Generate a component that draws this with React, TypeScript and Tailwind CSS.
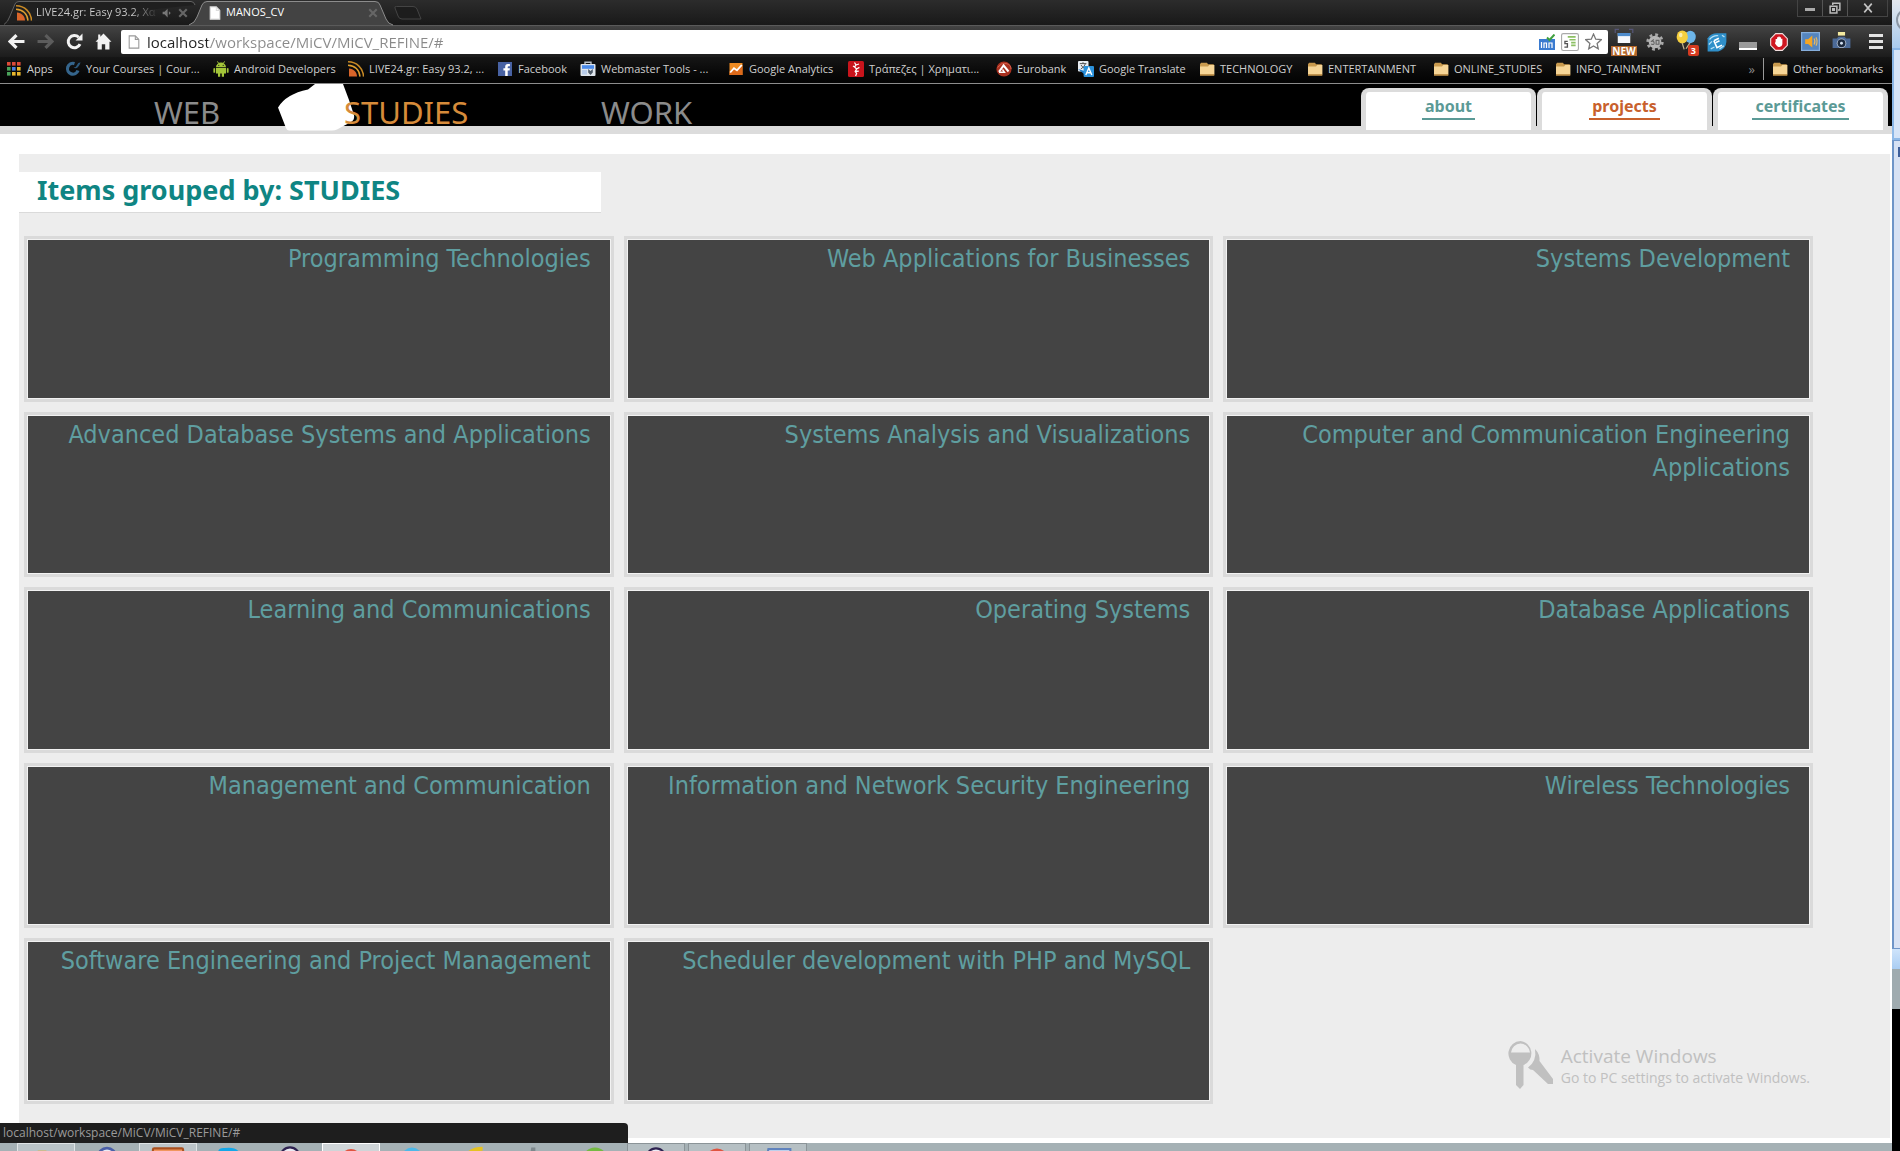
import type { ReactNode } from "react";

const cards = [
  "Programming Technologies",
  "Web Applications for Businesses",
  "Systems Development",
  "Advanced Database Systems and Applications",
  "Systems Analysis and Visualizations",
  "Computer and Communication Engineering Applications",
  "Learning and Communications",
  "Operating Systems",
  "Database Applications",
  "Management and Communication",
  "Information and Network Security Engineering",
  "Wireless Technologies",
  "Software Engineering and Project Management",
  "Scheduler development with PHP and MySQL",
];

function Svg({ children, className = "size-4" }: { children: ReactNode; className?: string }) {
  return (
    <svg viewBox="0 0 16 16" className={"shrink-0 " + className} fill="none" aria-hidden="true">
      {children}
    </svg>
  );
}

const Feed = () => (
  <Svg>
    <path d="M0 0.8C9 1 15 7 15.6 15.6" stroke="#c98a25" strokeWidth="1.6" />
    <path d="M0 4.2C7 4.5 11.5 9 12 15.6" stroke="#e0a030" strokeWidth="1.4" />
    <path d="M1 7.5C5.5 8 9 11 9 15.5H1Z" fill="#d9652a" />
  </Svg>
);
const Folder = () => (
  <Svg>
    <path d="M1 3.2 2 1.8H8L9 3.2H14.5L15 4V14.5H1Z" fill="#c99a4e" />
    <path d="M1 5.5H9L10.3 4H15.4V13.4H1Z" fill="#f6d596" />
    <path d="M1 13.2H15.4V14.6H1Z" fill="#b98b45" />
  </Svg>
);
const AppsIcon = () => (
  <Svg>
    {["#dd4b39", "#dd4b39", "#dd4b39", "#4aa35a", "#4a7fdc", "#e8b72e", "#4aa35a", "#e8b72e", "#e8b72e"].map((c, i) => (
      <rect key={i} x={1 + (i % 3) * 5} y={1 + Math.floor(i / 3) * 5} width="3.6" height="3.6" fill={c} />
    ))}
  </Svg>
);
const Coursera = () => (
  <Svg>
    <path d="M9.5 2.6A5.4 5.4 0 1 0 13 9.5" stroke="#35658c" strokeWidth="3.2" />
    <path d="M8.6 6.6Q11 8.4 13 6T15.6 1.6Q13 1.4 12 4T8.6 6.600Z" fill="#2c587b" />
  </Svg>
);
const Android = () => (
  <Svg>
    <path d="M3 6.3A5 4.8 0 0 1 13 6.3ZM3 7.1H13V12.6H3ZM0.4 7.4Q1.3 6.4 2.2 7.4V11.4Q1.3 12.3 0.4 11.4ZM13.8 7.4Q14.7 6.4 15.6 7.4V11.4Q14.7 12.3 13.8 11.4ZM5 12H7.2V15.7H5ZM8.8 12H11V15.7H8.8Z" fill="#a4c639" />
    <path d="M4.4 0.4 5.8 2.6M11.6 0.4 10.2 2.6" stroke="#a4c639" />
    <circle cx="5.8" cy="4.3" r=".6" fill="#111" />
    <circle cx="10.2" cy="4.3" r=".6" fill="#111" />
  </Svg>
);
const Facebook = () => (
  <Svg>
    <rect x="1" y="1" width="14" height="14" fill="#4862a3" />
    <path d="M8.2 15V9.6H6.4V7.3H8.2V5.6Q8.2 3 10.9 3H12.9V5.2H11.5Q10.7 5.2 10.7 6V7.3H12.9L12.6 9.6H10.7V15Z" fill="#fff" />
  </Svg>
);
const Webmaster = () => (
  <Svg>
    <path d="M5 3V1.2H11V3" stroke="#b8bec4" strokeWidth="1.4" />
    <rect x="0.5" y="3" width="15" height="12" rx="1" fill="#dfe5ec" />
    <rect x="2" y="4.2" width="12" height="3.6" fill="#4b8bea" />
    <rect x="2" y="9" width="5" height="4.5" fill="#b9cdea" />
    <path d="M8.2 8V11.5L10.5 14 12.8 11.5V8L10.5 10Z" fill="#4d5a68" />
  </Svg>
);
const Analytics = () => (
  <Svg>
    <rect x="1.5" y="2" width="13" height="12" fill="#ef8b22" />
    <path d="M1.5 14V11L6 7 9 9.5 14.5 4V14Z" fill="#dd6a1b" />
    <path d="M2.2 11.5 6 7.2 9 9.4 13.8 4" stroke="#fff" strokeWidth="1.8" />
  </Svg>
);
const RedBook = () => (
  <Svg>
    <rect width="16" height="16" rx="1.5" fill="#c8141c" />
    <path d="M6.5 1.5 8 4 6.6 6 8.6 8 7.2 10.5 8.6 12.4 7.6 15M8 4 11 3M8.6 8 11.4 6.4M7.2 10.5 10.8 10.2M6.6 6 5 5" stroke="#fff" strokeWidth="1.3" />
  </Svg>
);
const Eurobank = () => (
  <Svg>
    <circle cx="8" cy="8" r="7.6" fill="#a8301f" />
    <path d="M1.5 6.5Q5 1.5 10 2.500T15 8" stroke="#d8604c" />
    <path d="M3 10.800 7.600 4.500 12.500 10.500" stroke="#fff" strokeWidth="2" />
    <path d="M3 11.300H8.500L6.500 8.500" stroke="#fff" strokeWidth="1.400" />
  </Svg>
);
const Translate = () => (
  <Svg>
    <rect x="0" y="0" width="10.5" height="10.5" rx="1" fill="#e9edf2" />
    <path d="M1.8 2.6H8.4M5 1.2V2.6M2.8 8Q6.5 6 7.4 2.8M3 4Q4.5 6.8 7.5 7.8" stroke="#555" />
    <path d="M0 8 6 13 6.5 10Z" fill="#1b78c4" />
    <rect x="5.6" y="5" width="10.4" height="11" rx="1" fill="#2b92dc" />
    <path d="M7.8 14 10.8 7 13.8 14M8.8 11.8H12.8" stroke="#fff" strokeWidth="1.4" />
  </Svg>
);
const FileIcon = ({ fill, stroke }: { fill: string; stroke: string }) => (
  <Svg className="h-4 w-3.5">
    <path d="M2.5 1H9.5L13.5 5V15H2.5Z" fill={fill} stroke={stroke} strokeWidth="1.2" />
    <path d="M9.5 1V5H13.5" stroke={stroke} strokeWidth="1.2" />
  </Svg>
);
const Cross = () => (
  <Svg className="size-2.5">
    <path d="M2 2 14 14M14 2 2 14" stroke="#666" strokeWidth="3.4" />
  </Svg>
);

const bookmarks: [string, () => ReactNode, string][] = [
  ["Apps", AppsIcon, "w-[27px]"],
  ["Your Courses | Cour...", Coursera, "w-[116px]"],
  ["Android Developers", Android, "w-[103px]"],
  ["LIVE24.gr: Easy 93.2, ...", Feed, "w-[117px]"],
  ["Facebook", Facebook, "w-[51px]"],
  ["Webmaster Tools - ...", Webmaster, "w-[116px]"],
  ["Google Analytics", Analytics, "w-[88px]"],
  ["Τράπεζες | Χρηματι...", RedBook, "w-[116px]"],
  ["Eurobank", Eurobank, "w-[50px]"],
  ["Google Translate", Translate, "w-[89px]"],
  ["TECHNOLOGY", Folder, "w-[76px]"],
  ["ENTERTAINMENT", Folder, "w-[94px]"],
  ["ONLINE_STUDIES", Folder, "w-[90px]"],
  ["INFO_TAINMENT", Folder, "w-[92px]"],
];

function BrowserTabs() {
  return (
    <div className="flex h-[25px] items-start bg-linear-to-b from-[#2c2c2c] to-[#191919] pl-1">
      <div className="relative h-[25px] w-[192px]">
        <svg className="absolute inset-0 size-full" viewBox="0 0 192 25" preserveAspectRatio="none" aria-hidden="true">
          <path d="M0 24.5Q4 22 6 16L11 4Q12 1.5 15 1.5H187Q190 1.5 191 5" fill="#1f1f1f" stroke="#626262" />
        </svg>
        <div className="relative flex h-[25px] items-center pl-3">
          <Feed />
          <span className="ml-1 w-[120px] overflow-hidden bg-linear-to-r from-[#d0d0d0] from-80% to-[#333] bg-clip-text text-[11px] whitespace-nowrap text-transparent">
            LIVE24.gr: Easy 93.2, Χα
          </span>
          <Svg className="ml-1.5 size-2.5">
            <path d="M1 6H4L9 1V15L4 10H1ZM11 5 14 8 11 11" fill="#777" />
          </Svg>
          <button aria-label="Close tab" className="ml-1.5">
            <Cross />
          </button>
        </div>
      </div>
      <div className="relative h-[25px] w-[198px]">
        <svg className="absolute inset-0 size-full overflow-visible" viewBox="0 0 198 25" preserveAspectRatio="none" aria-hidden="true">
          <path d="M-7 25Q-1 23 1 17L6 5Q7.500 1.500 11 1.500H179Q183 1.500 184 5L190 19Q192 24 197 25Z" fill="#434343" />
          <path d="M-7 25Q-1 23 1 17L6 5Q7.500 1.500 11 1.500H179Q183 1.500 184 5L190 19Q192 24 197 25" fill="none" stroke="#8c8c8c" />
        </svg>
        <div className="relative flex h-[25px] items-center pl-3">
          <FileIcon fill="#fff" stroke="#ddd" />
          <span className="ml-1 w-[142px] text-[11px] text-white">MANOS_CV</span>
          <button aria-label="Close tab">
            <Cross />
          </button>
        </div>
      </div>
      <button aria-label="New tab" className="mt-1.5">
        <svg viewBox="0 0 28 14" className="h-3.5 w-7" fill="#1d1d1d" stroke="#444" aria-hidden="true">
          <path d="M1 2Q0 .5 2.500 .5H19Q22 .5 23 3L27 13H8Q5 13 4 10Z" />
        </svg>
      </button>
      <div className="mr-1 ml-auto flex h-[17px] w-[91px] divide-x divide-[#555] border-x border-b border-[#444]">
        <button aria-label="Minimize" className="flex w-[25px] justify-center pt-2">
          <span className="h-[3px] w-2.5 bg-[#aaa]" />
        </button>
        <button aria-label="Restore" className="flex w-[25px] items-center justify-center">
          <Svg className="size-3">
            <path d="M5 4V1.500H14.500V10.500H12" stroke="#bbb" strokeWidth="2" />
            <path d="M1.500 5.500H10.500V14.500H1.500ZM5 9H7V11H5Z" stroke="#bbb" strokeWidth="2" />
          </Svg>
        </button>
        <button aria-label="Close" className="flex flex-1 items-center justify-center">
          <Svg className="h-2.5 w-3">
            <path d="M2 1 14 15M14 1 2 15" stroke="#c4c4c4" strokeWidth="2.600" />
          </Svg>
        </button>
      </div>
    </div>
  );
}

function Extensions() {
  return (
    <div className="flex items-center gap-[7px] pl-1">
      <button aria-label="Screen capture" className="relative flex h-7 w-6 justify-center">
        <Svg className="size-5">
          <path d="M1 4V1H4M12 1H15V4" stroke="#557" strokeWidth="1" />
          <rect x="3" y="4" width="10" height="8" fill="#f5f8fc" />
          <rect x="3" y="4" width="10" height="2.500" fill="#4e8ccc" />
        </Svg>
        <span className="absolute bottom-0 bg-[#b3672c] px-px text-[10px] leading-[10px] font-bold text-white">NEW</span>
      </button>
      <button aria-label="Settings extension" className="flex w-6 justify-center">
        <Svg className="size-[18px]">
          <circle cx="8" cy="8" r="5.600" fill="#b5b5b5" />
          <circle cx="8" cy="8" r="6.500" stroke="#a8a8a8" strokeWidth="2.400" strokeDasharray="2.500 2.600" />
          <path d="M4.600 9.800Q7.500 11 7.200 8.800T5.200 7.400 7 5.800M9 10V6.500H11.500V10Z" stroke="#666" />
        </Svg>
      </button>
      <button aria-label="Balloons" className="relative flex h-6 w-6 justify-center">
        <Svg className="size-5">
          <ellipse cx="11.500" cy="5.500" rx="4.300" ry="5" fill="#6db6ea" />
          <ellipse cx="5" cy="5.500" rx="4.500" ry="5.200" fill="#f5cf3f" />
          <ellipse cx="3.800" cy="4" rx="1.400" ry="1.800" fill="#fbeeb0" />
          <path d="M5 10.500 6.500 15.500M11 10.500 8 15" stroke="#c8b48a" />
        </Svg>
        <span className="absolute -right-px -bottom-0.5 rounded-xs bg-[#d63a20] px-[3px] text-[9px] leading-[11px] font-bold text-white">3</span>
      </button>
      <button aria-label="Editor" className="flex w-6 justify-center">
        <Svg className="size-5">
          <path d="M0.500 5Q3 1 8 1H15.500V8Q15 14 9 15.500H.5Z" fill="#2f8fc9" />
          <path d="M2 6Q5 2.500 9 3M1.500 10 4 7.500M3 13.500 6 12M12 2.500 14 4M10 13.500 13.500 11" stroke="#b6e0f5" />
          <path d="M5.500 7 8 12.500 12 10.500M7 8.500 10 7M5.500 7 9.500 5" stroke="#fff" strokeWidth="1.300" />
        </Svg>
      </button>
      <button aria-label="Bar" className="flex h-4 w-6 items-end justify-center">
        <span className="h-2 w-[18px] border-b-2 border-white bg-[#9a9a9a]" />
      </button>
      <button aria-label="Ad blocker" className="flex w-6 justify-center">
        <Svg className="size-[18px]">
          <path d="M5 .6H11L15.400 5V11L11 15.400H5L.6 11V5Z" fill="#cf1620" stroke="#f2dede" />
          <path d="M5 7.500V5.300H6.300V3.800H7.500V3.200H8.600V3.800H9.800V5.200H11V10Q10.500 12.500 8.500 12.500H7.600Q6.500 12.300 4.400 9Z" fill="#fff" />
        </Svg>
      </button>
      <button aria-label="Volume" className="flex w-6 justify-center">
        <Svg className="size-[19px]">
          <rect x=".5" y=".5" width="15" height="15" fill="#5485bf" stroke="#86aedb" />
          <path d="M3.500 6H6L9.500 3V13L6 10H3.500Z" fill="#f5a623" />
          <path d="M11 5.500Q12.500 8 11 10.500M12.600 4.500Q14.500 8 12.600 11.500" stroke="#e8b860" />
        </Svg>
      </button>
      <button aria-label="Camera" className="flex w-6 justify-center">
        <Svg className="size-[19px]">
          <rect x="5" y="0" width="6" height="3" fill="#f3e9a0" />
          <path d="M.5 5.500H4L5.500 4H10.500L12 5.500H15.500V13.500H.5Z" fill="#4c6a97" />
          <circle cx="8" cy="9.500" r="4" fill="#b9c6d8" />
          <circle cx="8" cy="9.500" r="3.300" fill="#1d2a3e" />
          <circle cx="8" cy="9.500" r="1.200" fill="#d5e2f2" />
        </Svg>
      </button>
      <button aria-label="Menu" className="ml-1 flex w-6 flex-col items-center gap-[3px]">
        <span className="h-[3px] w-3.5 bg-[#e4e4e4]" />
        <span className="h-[3px] w-3.5 bg-[#e4e4e4]" />
        <span className="h-[3px] w-3.5 bg-[#e4e4e4]" />
      </button>
    </div>
  );
}

function Toolbar() {
  return (
    <div className="flex h-8 items-center border-t border-[#5a5a5a] bg-linear-to-b from-[#434343] to-[#1c1c1c] pr-1 pl-2">
      <div className="flex w-[113px] gap-3">
        <button aria-label="Back">
          <Svg className="size-[17px]">
            <path d="M8 2 2 8 8 14M2 8H15.500" stroke="#f2f2f2" strokeWidth="3" />
          </Svg>
        </button>
        <button aria-label="Forward">
          <Svg className="size-[17px]">
            <path d="M8 2 14 8 8 14M14 8H.5" stroke="#5c5c5c" strokeWidth="3" />
          </Svg>
        </button>
        <button aria-label="Reload">
          <Svg className="size-[17px]">
            <path d="M13.200 10.500A5.800 5.800 0 1 1 12 4" stroke="#f2f2f2" strokeWidth="2.800" />
            <path d="M15.500 .5V7H9Z" fill="#f2f2f2" />
          </Svg>
        </button>
        <button aria-label="Home">
          <Svg className="size-[17px]">
            <path d="M8 .5 15.500 8.300H13.600V15.500H9.600V10.500H6.400V15.500H2.400V8.300H.5L3 5.600V1.500H5V3.600Z" fill="#f2f2f2" />
          </Svg>
        </button>
      </div>
      <div className="flex h-6 flex-1 items-center gap-1.5 rounded-xs bg-white px-1.5">
        <FileIcon fill="#fff" stroke="#999" />
        <input
          aria-label="Address"
          defaultValue="localhost/workspace/MiCV/MiCV_REFINE/#"
          className="h-6 min-w-0 flex-1 bg-[linear-gradient(to_right,#222_61px,#8a8a8a_61px)] bg-clip-text text-[15px] text-transparent outline-none"
        />
        <Svg className="size-4">
          <rect y="5" width="16" height="11" fill="#3a7bd0" />
          <path d="M2.500 8V14M5 14V9H7.500V14M10 14V9H13V14" stroke="#fff" strokeWidth="1.200" />
          <path d="M8 3.500 10.500 6 15.500 .5" stroke="#3fa03f" strokeWidth="2" />
        </Svg>
        <Svg className="size-[18px]">
          <rect x=".5" y=".5" width="15" height="15" rx="1.500" fill="#fff" stroke="#aaa" />
          <path d="M6 3.500H13M7.500 6H13M9 8.500H13M9 11H13" stroke="#8cc063" strokeWidth="1.500" />
          <path d="M6 7.500H3.500V9.500H5.700V12.500H3" stroke="#555" strokeWidth="1.200" />
        </Svg>
        <Svg className="size-[17px]">
          <path d="M8 1 10.100 5.800 15.300 6.300 11.400 9.800 12.500 14.900 8 12.200 3.500 14.900 4.600 9.800 .7 6.300 5.900 5.800Z" stroke="#777" strokeWidth="1.200" />
        </Svg>
      </div>
      <Extensions />
    </div>
  );
}

function Bookmarks() {
  return (
    <nav aria-label="Bookmarks" className="flex h-[27px] items-center border-b border-[#8d8d8d] bg-linear-to-b from-[#161616] to-[#030303] px-1.5 pb-[3px] text-[11px] leading-4 text-[#cfcfcf]">
      <div className="flex min-w-0 flex-1 items-center gap-[11px] overflow-hidden">
        {bookmarks.map(([label, Icon, width]) => (
          <a key={label} href="#" className="flex shrink-0 items-center gap-[5px] whitespace-nowrap">
            <Icon />
            <span className={width}>{label}</span>
          </a>
        ))}
      </div>
      <button aria-label="More bookmarks" className="text-[13px] text-[#888]">
        »
      </button>
      <span className="mx-2 h-[22px] w-px bg-[#999]" />
      <a href="#" className="flex items-center gap-[5px] whitespace-nowrap">
        <Folder />
        <span className="w-[93px]">Other bookmarks</span>
      </a>
    </nav>
  );
}

function SiteTab({ label, active = false }: { label: string; active?: boolean }) {
  return (
    <a
      href="#"
      className="flex w-[175px] justify-center rounded-t-lg border-x-[5px] border-t-4 border-[#dcdcdc] bg-white pt-0.5 text-[16px] leading-6 font-bold"
    >
      <span
        className={
          active
            ? "h-[26px] border-b-2 border-[#c8602c] px-[3px] text-[#c8602c]"
            : "h-[26px] border-b-2 border-[#5b9a96] px-[3px] text-[#5b9a96]"
        }
      >
        {label}
      </span>
    </a>
  );
}

function SiteHeader() {
  return (
    <header className="flex h-[50px] items-start border-b-8 border-[#dcdcdc] bg-black pr-1 pl-[154px] font-['Noto_Sans',sans-serif]">
      <nav aria-label="Sections" className="flex pt-3 text-[31px] leading-8 text-[#8b8b8b]">
        <a href="#" className="w-[190px]">
          WEB
        </a>
        <a href="#" className="relative w-[257px] text-[#d68b3a]">
          <svg viewBox="0 0 77 47" className="absolute -top-3 -left-[66px] h-[47px] w-[77px]" fill="#fff" aria-hidden="true">
            <path d="M0 23.500Q8 10 30 5.500L37 0H65L71 16 76 31Q77 36 73 38L59 45.500Q57 46.500 54 46.500H11Q9 46.500 8 44Z" />
          </svg>
          <span className="relative">STUDIES</span>
        </a>
        <a href="#">WORK</a>
      </nav>
      <nav aria-label="Pages" className="ml-auto pt-1">
        <div className="flex h-[42px] gap-px">
          <SiteTab label="about" />
          <SiteTab label="projects" active />
          <SiteTab label="certificates" />
        </div>
      </nav>
    </header>
  );
}

const raised = "border border-[#8b9498] bg-[#b6c0c4]";
const taskIcons: [ReactNode, string][] = [
  [<path d="M2 2.500H8L10 4H15V16H2Z" fill="#d9b65c" />, "border border-[#dfe4e6] bg-[#b9c3c7]"],
  [<circle cx="8" cy="8" r="6.500" fill="#e8ecf6" stroke="#4a5fa8" strokeWidth="2" />, ""],
  [<rect x="-3" y="1" width="22" height="18" rx="1" fill="#f0965e" stroke="#a9501f" strokeWidth="1.500" />, "border border-[#dfe4e6] bg-[#bcc5c9]"],
  [<path d="M0 5Q0 1 5 1.500 16 0 17 9V16H0Z" fill="#14a7e8" />, ""],
  [<circle cx="8" cy="8" r="7" fill="#ecebf4" stroke="#2d2150" strokeWidth="1.500" />, ""],
  [<circle cx="8" cy="9" r="7.500" fill="#e0543f" />, "border border-white bg-[#cfd5d8]"],
  [<circle cx="8" cy="8.500" r="7.500" fill="#4db8e8" />, ""],
  [<path d="M2 10Q5 2 15 2" stroke="#e5c222" strokeWidth="3" />, ""],
  [<path d="M6 1H9V5L11 8H5Z" fill="#7d888c" />, ""],
  [<circle cx="8" cy="10" r="9" fill="#74b943" />, ""],
  [<circle cx="8" cy="8" r="7" fill="#ecebf4" stroke="#2d2150" strokeWidth="1.500" />, raised],
  [<circle cx="8" cy="9" r="8" fill="#e0543f" />, raised],
  [<path d="M-1 12 1 1.500H17V16H-1Z" fill="#bdd0ec" stroke="#5f82bd" strokeWidth="1.500" />, raised],
];

function Taskbar() {
  return (
    <footer className="flex h-2 gap-[3px] overflow-hidden bg-[#a5b1b5] pl-[17px]">
      {taskIcons.map(([icon, look], i) => (
        <button key={i} aria-label={"Task " + (i + 1)} className={"flex h-10 w-[58px] shrink-0 justify-center pt-[3px] " + look}>
          <Svg className="size-[22px] overflow-visible">{icon}</Svg>
        </button>
      ))}
    </footer>
  );
}

function NextWindowEdge() {
  return (
    <aside aria-hidden="true" className="flex w-2 shrink-0 flex-col overflow-hidden bg-black">
      <div className="h-12 bg-linear-to-b from-[#e4e8ee] to-[#a9cbee] pt-2">
        <div className="ml-1 size-6 rounded-full border-2 border-[#8b97a5] bg-[#dde5ee]" />
      </div>
      <div className="h-[92px] border-y-2 border-l-2 border-[#8ab6e6] bg-[#d6e4f7]" />
      <div className="h-[809px] border-y border-l-2 border-[#6f95c8] bg-[#d8e2f4] pt-1.5">
        <div className="ml-1 h-2.5 w-2 border-2 border-[#3f5f9a]" />
      </div>
      <div className="h-5 bg-linear-to-b from-[#cfe4fb] to-[#a9cdf3]" />
      <div className="h-10 bg-[#9fabaf]" />
    </aside>
  );
}

export default function App() {
  return (
    <div className="flex min-h-screen bg-white font-['Open_Sans',sans-serif]">
      <div className="relative flex min-w-0 flex-1 flex-col">
        <BrowserTabs />
        <Toolbar />
        <Bookmarks />
        <SiteHeader />
        <main className="mt-5 mr-0.5 mb-[5px] ml-[19px] flex flex-1 flex-col bg-[#ededed] pt-[18px] pb-[34px]">
          <h1 className="h-[41px] w-[582px] border-b border-[#dadada] bg-white pl-[18px] font-['Noto_Sans',sans-serif] text-[27px] leading-9 font-bold text-[#0f8583]">
            Items grouped by: STUDIES
          </h1>
          <ul className="mt-[23px] mr-[77px] ml-[5px] grid flex-1 auto-rows-fr grid-cols-3 gap-2.5">
            {cards.map((title) => (
              <li key={title} className="border-[3px] border-[#dadada]">
                <a
                  href="#"
                  className="block h-full border border-[#f2f2f2] bg-[#444] pt-0.5 pr-[19px] pl-5 text-right font-['DejaVu_Sans_Condensed','Noto_Sans',sans-serif] text-[25px] leading-[33px] text-[#5f9ea0]"
                >
                  {title}
                </a>
              </li>
            ))}
          </ul>
        </main>
        <Taskbar />
        <div className="absolute bottom-2 left-0 h-5 w-[628px] rounded-tr-sm bg-[#1e1e1e] pl-[3px] text-[12px] leading-5 text-[#9a9a9a]">
          localhost/workspace/MiCV/MiCV_REFINE/#
        </div>
        <div className="absolute right-[82px] bottom-[62px] flex gap-2 text-[#c0c0c0]">
          <svg viewBox="0 0 45 48" className="h-12 w-[45px]" fill="currentColor" aria-hidden="true">
            <path d="M12.500 0A12.500 12.500 0 0 0 8 24V44L12 48 15.500 44V24A12.500 12.500 0 0 0 12.500 0ZM12.500 2.500A10 10 0 0 1 22 11.500H3A10 10 0 0 1 12.500 2.500Z" fillRule="evenodd" />
            <path d="M27 8Q32 13 31.500 20L45 38V43H40L25 29Q22 29 20 26.500 29 20 27 8Z" />
          </svg>
          <div className="pt-px">
            <p className="text-[19px] leading-7">Activate Windows</p>
            <p className="text-[14px] leading-4">Go to PC settings to activate Windows.</p>
          </div>
        </div>
      </div>
      <NextWindowEdge />
    </div>
  );
}
